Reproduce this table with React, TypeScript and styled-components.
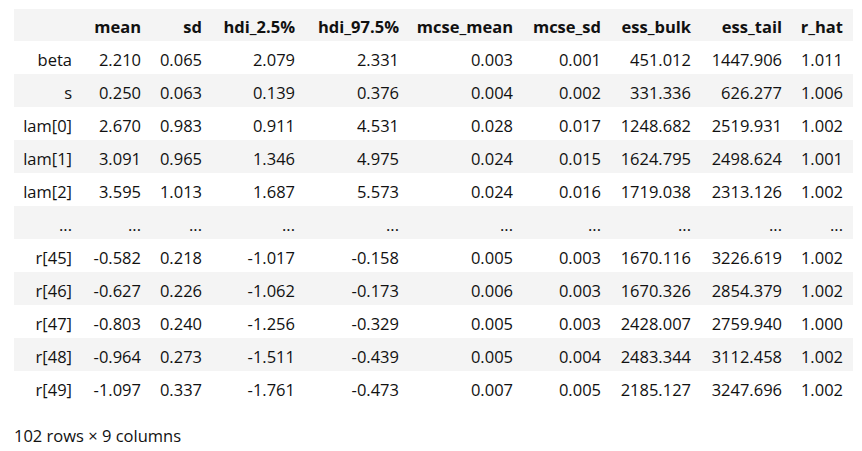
import styled, { createGlobalStyle } from "styled-components";

const GlobalStyle = createGlobalStyle`
  html, body {
    margin: 0;
    padding: 0;
    background: #ffffff;
  }
  body {
    font-family: "Open Sans", "Noto Sans", sans-serif;
    color: #111111;
  }
`;

const columns = [
  "mean",
  "sd",
  "hdi_2.5%",
  "hdi_97.5%",
  "mcse_mean",
  "mcse_sd",
  "ess_bulk",
  "ess_tail",
  "r_hat",
];

// widths measured from the output cell, index column first
const widths = [68, 69, 61, 93, 104, 114, 88, 90, 91, 61];

const rows: [string, string[]][] = [
  ["beta", ["2.210", "0.065", "2.079", "2.331", "0.003", "0.001", "451.012", "1447.906", "1.011"]],
  ["s", ["0.250", "0.063", "0.139", "0.376", "0.004", "0.002", "331.336", "626.277", "1.006"]],
  ["lam[0]", ["2.670", "0.983", "0.911", "4.531", "0.028", "0.017", "1248.682", "2519.931", "1.002"]],
  ["lam[1]", ["3.091", "0.965", "1.346", "4.975", "0.024", "0.015", "1624.795", "2498.624", "1.001"]],
  ["lam[2]", ["3.595", "1.013", "1.687", "5.573", "0.024", "0.016", "1719.038", "2313.126", "1.002"]],
  ["...", ["...", "...", "...", "...", "...", "...", "...", "...", "..."]],
  ["r[45]", ["-0.582", "0.218", "-1.017", "-0.158", "0.005", "0.003", "1670.116", "3226.619", "1.002"]],
  ["r[46]", ["-0.627", "0.226", "-1.062", "-0.173", "0.006", "0.003", "1670.326", "2854.379", "1.002"]],
  ["r[47]", ["-0.803", "0.240", "-1.256", "-0.329", "0.005", "0.003", "2428.007", "2759.940", "1.000"]],
  ["r[48]", ["-0.964", "0.273", "-1.511", "-0.439", "0.005", "0.004", "2483.344", "3112.458", "1.002"]],
  ["r[49]", ["-1.097", "0.337", "-1.761", "-0.473", "0.007", "0.005", "2185.127", "3247.696", "1.002"]],
];

const Output = styled.div`
  padding: 9px 0 0 14px;
`;

const Frame = styled.table`
  width: 839px;
  table-layout: fixed;
  border-collapse: collapse;
  border-spacing: 0;
  font-size: 16.5px;
`;

const HeadRow = styled.tr`
  background: #f4f4f4;
  height: 32px;
`;

const BodyRow = styled.tr`
  height: 33px;
  &:nth-child(even) {
    background: #f4f4f4;
  }
`;

const ColTitle = styled.th`
  padding: 2px 10px 0 0;
  text-align: right;
  font-weight: 700;
  white-space: nowrap;
`;

const RowTitle = styled.th`
  padding: 3px 10px 0 0;
  text-align: right;
  font-weight: 400;
  white-space: nowrap;
`;

const Cell = styled.td`
  padding: 3px 10px 0 0;
  text-align: right;
  white-space: nowrap;
`;

const Shape = styled.p`
  margin: 20px 0 0;
  font-size: 16.5px;
`;

export default function App() {
  return (
    <>
      <GlobalStyle />
      <Output>
        <Frame>
          <colgroup>
            {widths.map((w, i) => (
              <col key={i} style={{ width: w }} />
            ))}
          </colgroup>
          <thead>
            <HeadRow>
              <ColTitle />
              {columns.map((c) => (
                <ColTitle key={c}>{c}</ColTitle>
              ))}
            </HeadRow>
          </thead>
          <tbody>
            {rows.map(([name, values]) => (
              <BodyRow key={name}>
                <RowTitle>{name}</RowTitle>
                {values.map((v, i) => (
                  <Cell key={i}>{v}</Cell>
                ))}
              </BodyRow>
            ))}
          </tbody>
        </Frame>
        <Shape>102 rows × 9 columns</Shape>
      </Output>
    </>
  );
}
